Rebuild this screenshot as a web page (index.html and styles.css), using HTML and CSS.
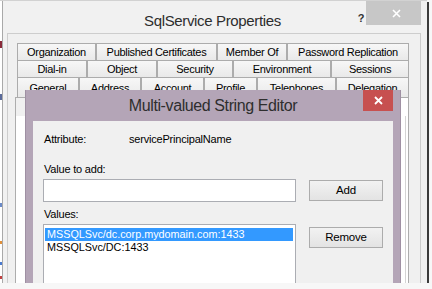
FILE: index.html
```html
<!DOCTYPE html>
<html lang="en">
<head>
<meta charset="utf-8">
<title>SqlService Properties</title>
<link rel="stylesheet" href="styles.css">
</head>
<body>
  <div class="shot">
    <div class="behind"></div>
    <div class="window">
      <div class="titlebar">
        <div class="title">SqlService Properties</div>
        <div class="help">?</div>
        <div class="close">
          <svg width="9" height="9" viewBox="0 0 9 9"><path d="M1 1L8 8M8 1L1 8" stroke="#fff" stroke-width="1.6"/></svg>
        </div>
      </div>
      <div class="client">
        <div class="tabctl">
          <div class="tabrow">
            <div class="tab" style="width:79px">Organization</div>
            <div class="tab" style="width:121px">Published Certificates</div>
            <div class="tab" style="width:70px">Member Of</div>
            <div class="tab" style="width:122px">Password Replication</div>
          </div>
          <div class="tabrow">
            <div class="tab" style="width:70px">Dial-in</div>
            <div class="tab" style="width:70px">Object</div>
            <div class="tab" style="width:76px">Security</div>
            <div class="tab" style="width:98px">Environment</div>
            <div class="tab" style="width:78px">Sessions</div>
          </div>
          <div class="tabrow last">
            <div class="tab" style="width:62px">General</div>
            <div class="tab" style="width:62px">Address</div>
            <div class="tab" style="width:63px">Account</div>
            <div class="tab" style="width:53px">Profile</div>
            <div class="tab" style="width:79px">Telephones</div>
            <div class="tab" style="width:73px">Delegation</div>
          </div>
          <div class="page">
            <div class="page-list"></div>
          </div>
        </div>
      </div>
    </div>

    <!-- the editor dialog sits on top of the properties window -->
    <div class="editor">
      <div class="ed-title">
        <div class="ed-caption">Multi-valued String Editor</div>
        <div class="ed-close">
          <svg width="9" height="9" viewBox="0 0 9 9"><path d="M1 1L8 8M8 1L1 8" stroke="#fff" stroke-width="1.8"/></svg>
        </div>
      </div>
      <div class="ed-body">
        <div class="attr">
          <span class="attr-name">Attribute:</span>
          <span>servicePrincipalName</span>
        </div>
        <div class="label lbl-add">Value to add:</div>
        <div class="line">
          <div class="input"></div>
          <div class="btn">Add</div>
        </div>
        <div class="label lbl-values">Values:</div>
        <div class="line">
          <div class="listbox">
            <div class="item selected">MSSQLSvc/dc.corp.mydomain.com:1433</div>
            <div class="item">MSSQLSvc/DC:1433</div>
          </div>
          <div class="btn btn-remove">Remove</div>
        </div>
      </div>
    </div>
  </div>
</body>
</html>
```

FILE: styles.css
```css
* {
  margin: 0;
  padding: 0;
  box-sizing: border-box;
}
body {
  background-color: #f7f7f7;
  font-family: "Liberation Sans", Arial, sans-serif;
  color: #000;
}

.shot {
  position: relative;
  width: 427px;
  height: 283px;
  overflow: hidden;
  display: flex;
  border-top: 1px solid #d2d2d2;
  background-color: #fff;
  box-shadow: 2px 2px 0 #3b3b3b;
}
.behind {
  width: 2px;
  background: linear-gradient(#fff 0, #fff 40px, #8a2a3a 40px, #8a2a3a 47px, #fff 47px,
    #fff 93px, #5a6a9a 93px, #5a6a9a 99px, #fff 99px, #fff 202px, #6a8ac8 202px, #6a8ac8 206px,
    #fff 206px, #fff 240px, #e0903a 240px, #e0903a 243px, #fff 243px, #fff 261px,
    #4a7ad0 261px, #4a7ad0 264px, #fff 264px, #fff 275px, #c04040 275px, #c04040 278px, #fff 278px);
}

/* properties window */
.window {
  width: 425px;
  display: flex;
  flex-direction: column;
  border-left: 1px solid #a9a9a9;
  background-color: #f1f1f1;
  padding: 0 6px 0 4px;
}
.titlebar {
  height: 32px;
  display: flex;
  align-items: flex-start;
}
.title {
  flex: 1;
  padding-left: 61px;
  padding-top: 11px;
  text-align: center;
  font-size: 15px;
  letter-spacing: -0.35px;
  line-height: 17px;
  color: #2d2d2d;
}
.help {
  width: 8px;
  padding-top: 10px;
  font-size: 11px;
  font-weight: bold;
  line-height: 14px;
  text-align: center;
  color: #333;
}
.close {
  width: 55px;
  height: 24px;
  margin-left: 1px;
  background-color: #c7c7c7;
  display: flex;
  justify-content: center;
  align-items: center;
  padding-left: 6px;
}
.client {
  flex: 1;
  display: flex;
  border: 1px solid #cdcdcd;
  border-bottom: none;
  background-color: #f0f0f0;
  padding: 9px 11px 0 7px;
}
.tabctl {
  flex: 1;
  display: flex;
  flex-direction: column;
}
.tabrow {
  display: flex;
  height: 17px;
  padding-left: 2px;
}
.tabrow.last {
  height: 20px;
}
.tab {
  flex: none;
  border: 1px solid #acacac;
  border-bottom: none;
  background: linear-gradient(#f7f7f7, #e9e9e9);
  font-size: 11px;
  letter-spacing: -0.3px;
  line-height: 16px;
  text-align: center;
  white-space: nowrap;
  overflow: hidden;
}
.tabrow.last .tab {
  line-height: 20px;
}
.page {
  flex: 1;
  border: 1px solid #adadad;
  border-bottom: none;
  background: linear-gradient(#f0f0f0, #f0f0f0) no-repeat 0 0 / 12px 18px, #fff;
  padding: 18px 2px 0 0;
  display: flex;
}
.page-list {
  flex: 1;
  border-right: 1px solid #d4d4d4;
  background-color: #fff;
}

/* multi-valued string editor */
.editor {
  position: absolute;
  left: 25px;
  top: 89px;
  width: 376px;
  height: 200px;
  display: flex;
  flex-direction: column;
  background-color: #b4a5b7;
  border-left: 1px solid #9f90a3;
  border-right: 1px solid #9f90a3;
  padding: 0 7px;
}
.ed-title {
  height: 31px;
  display: flex;
  align-items: flex-start;
}
.ed-caption {
  flex: 1;
  padding-left: 30px;
  font-size: 16px;
  letter-spacing: -0.4px;
  line-height: 31px;
  text-align: center;
  color: #2e2e2e;
}
.ed-close {
  width: 30px;
  height: 21px;
  background-color: #c75050;
  display: flex;
  justify-content: center;
  align-items: center;
}
.ed-body {
  flex: 1;
  background-color: #f0f0f0;
  padding: 11px 10px 0 10px;
  font-size: 11px;
  letter-spacing: -0.2px;
}
.attr {
  display: flex;
  line-height: 14px;
  padding-left: 1px;
}
.attr-name {
  width: 85px;
}
.label {
  line-height: 14px;
  padding-left: 1px;
}
.lbl-add {
  margin-top: 16px;
}
.lbl-values {
  margin-top: 5px;
}
.line {
  display: flex;
  align-items: flex-start;
  gap: 13px;
  margin-top: 3px;
}
.input {
  width: 253px;
  height: 23px;
  border: 1px solid #abadb3;
  background-color: #fff;
}
.btn {
  width: 74px;
  height: 21px;
  margin-top: 1px;
  border: 1px solid #acacac;
  background: linear-gradient(#f2f2f2, #e3e3e3);
  font-size: 11.5px;
  letter-spacing: -0.2px;
  line-height: 19px;
  text-align: center;
}
.btn-remove {
  margin-top: 3px;
}
.listbox {
  width: 253px;
  height: 80px;
  border: 1px solid #abadb3;
  background-color: #fff;
  padding: 3px 2px 0 1px;
}
.item {
  font-size: 10.8px;
  letter-spacing: 0;
  line-height: 13px;
  padding-left: 2px;
  white-space: nowrap;
}
.selected {
  background-color: #3399ff;
  color: #fff;
}
```
